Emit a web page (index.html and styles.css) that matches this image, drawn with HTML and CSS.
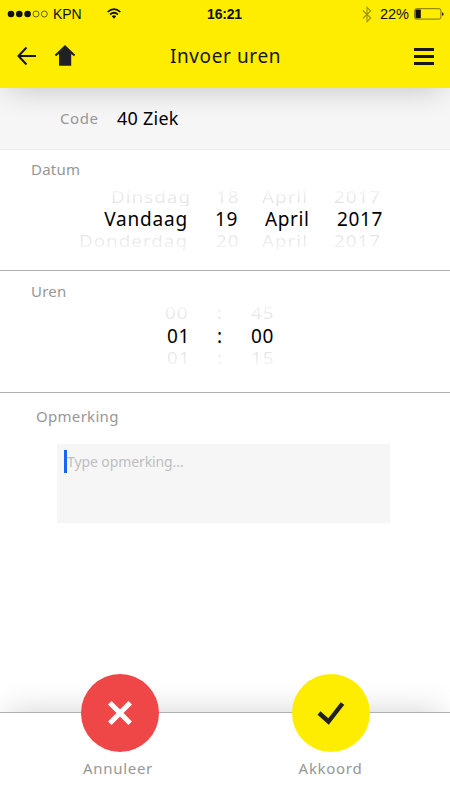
FILE: index.html
```
<!DOCTYPE html>
<html lang="nl">
<head>
<meta charset="utf-8">
<title>Invoer uren</title>
<link rel="stylesheet" href="styles.css">
</head>
<body>
<div class="app">
  <header class="header">
    <div class="status">
      <div class="carrier">
        <svg width="41" height="8" viewBox="0 0 41 8"><g fill="#111"><circle cx="4" cy="4" r="3.3"/><circle cx="12.3" cy="4" r="3.3"/><circle cx="20.6" cy="4" r="3.3"/></g><g fill="none" stroke="#222" stroke-width=".7"><circle cx="29" cy="4" r="3"/><circle cx="37.3" cy="4" r="3"/></g></svg>
        <span class="provider">KPN</span>
        <svg class="wifi" width="14" height="11" viewBox="0 0 14 11"><g fill="none" stroke="#111" stroke-width="1.7"><path d="M.6 4Q7-1.9 13.4 4"/><path d="M3.1 6.5Q7 3 10.9 6.5"/></g><path fill="#111" d="M4.8 8.2Q7 6.5 9.2 8.2L7 10.7z"/></svg>
      </div>
      <span class="clock">16:21</span>
      <div class="battery">
        <svg width="10" height="17" viewBox="0 0 10 17"><path d="M.8 4.5 8.7 12 5 15.6V1.4L8.7 5 .8 12.5" fill="none" stroke="#9b9200" stroke-width="1.1"/></svg>
        <span class="percent">22%</span>
        <svg width="30" height="12" viewBox="0 0 30 12"><rect x=".6" y=".7" width="26.3" height="10.4" rx="1.8" fill="none" stroke="#5c570d" stroke-width=".8"/><rect x="1.5" y="1.6" width="5.3" height="8.6" rx=".6" fill="#111"/><path d="M28 4.2q1.7.4 1.7 1.8T28 7.8z" fill="#222"/></svg>
      </div>
    </div>
    <nav class="navbar">
      <div class="nav-left">
        <svg width="19" height="20" viewBox="0 0 19 20"><path d="M9.5 1.5 1.5 10l8 8.5M1.5 10H19" fill="none" stroke="#16161e" stroke-width="2"/></svg>
        <svg class="home" width="22" height="21" viewBox="0 0 22 21"><path fill="#202126" d="M11 0 21.2 9.8 20 11.2 17.2 9V20.8H5V9L2 11.2.8 9.8z"/></svg>
      </div>
      <h1 class="title">Invoer uren</h1>
      <svg class="menu" width="20" height="17" viewBox="0 0 20 17"><path d="M0 1.5h20M0 8.5h20M0 15.5h20" stroke="#16161e" stroke-width="3"/></svg>
    </nav>
  </header>

  <section class="code"><span class="label code-label">Code</span><span class="code-value">40 Ziek</span></section>

  <section class="section date">
    <h2 class="label">Datum</h2>
    <div class="picker">
      <div class="row faded upper"><span class="day">Dinsdag</span><span>18</span><span>April</span><span>2017</span></div>
      <div class="row current"><span class="day">Vandaag</span><span>19</span><span>April</span><span>2017</span></div>
      <div class="row faded lower"><span class="day">Donderdag</span><span>20</span><span>April</span><span>2017</span></div>
    </div>
  </section>

  <section class="section hours">
    <h2 class="label">Uren</h2>
    <div class="picker">
      <div class="row faded upper"><span>00</span><span>:</span><span>45</span></div>
      <div class="row current"><span>01</span><span>:</span><span>00</span></div>
      <div class="row faded lower"><span class="one">01</span><span>:</span><span>15</span></div>
    </div>
  </section>

  <section class="remark">
    <h2 class="label">Opmerking</h2>
    <div class="input"><span class="caret"></span><span class="placeholder">Type opmerking...</span></div>
  </section>

  <footer class="footer">
    <div class="action">
      <div class="circle cancel"><svg width="26" height="26" viewBox="0 0 26 26"><path d="M2.8 2.8 23.2 23.2M23.2 2.8 2.8 23.2" stroke="#fff" stroke-width="5"/></svg></div>
      <span class="label cancel-label">Annuleer</span>
    </div>
    <div class="action">
      <div class="circle confirm"><svg width="28" height="25" viewBox="0 0 28 25"><path d="M2 12 11.5 20.5 25.5 2.5" fill="none" stroke="#202126" stroke-width="4.4"/></svg></div>
      <span class="label confirm-label">Akkoord</span>
    </div>
  </footer>
</div>
</body>
</html>
```
FILE: styles.css
```
* { box-sizing: border-box; }
body { margin: 0; background: #fff; font-family: "Noto Sans", sans-serif; }
svg { display: block; flex: none; }
h1, h2 { margin: 0; font-weight: 400; }
.app { width: 450px; height: 800px; display: flex; flex-direction: column; overflow: hidden; background: #fff; }

.header { height: 88px; flex: none; background: #ffed00; position: relative; z-index: 1; box-shadow: 0 10px 30px -8px rgba(0, 0, 0, .2); }
.status { height: 28px; display: grid; grid-template-columns: 1fr auto 1fr; align-items: center; padding: 0 6px 0 7px; font-family: "Liberation Sans", sans-serif; color: #111; }
.carrier, .battery { display: flex; align-items: center; }
.provider { font-size: 14px; margin-left: 5px; letter-spacing: -.1px; }
.wifi { margin-left: 25px; margin-top: -2px; }
.clock { font-size: 14px; font-weight: 700; letter-spacing: -.2px; margin-left: -2px; }
.battery { justify-content: flex-end; }
.percent { font-size: 14.5px; margin: 0 5px 0 8px; }
.navbar { height: 56px; display: grid; grid-template-columns: 1fr auto 1fr; align-items: center; padding: 0 16px 0 17px; }
.nav-left { display: flex; align-items: center; }
.home { margin-left: 18px; margin-top: -1px; }
.title { font-size: 19px; line-height: 26px; letter-spacing: .6px; color: #16161e; }
.menu { justify-self: end; }

.label { font-size: 15px; line-height: 20px; letter-spacing: .25px; color: #979797; }
.code { height: 62px; flex: none; background: #f6f6f6; border-bottom: 1px solid #eee; display: flex; align-items: center; padding: 0 0 1px 60px; }
.code-label { width: 57px; position: relative; z-index: 2; letter-spacing: .6px; }
.code-value { font-size: 18px; color: #000; position: relative; z-index: 2; letter-spacing: .25px; }

.section { flex: none; border-bottom: 1px solid #b0b0b0; padding-left: 31px; }
.date { height: 121px; padding-top: 9px; }
.hours { height: 122px; padding-top: 10px; }
.picker { margin-left: -31px; }
.row { display: grid; height: 22px; line-height: 22px; font-size: 19px; white-space: nowrap; color: #000; }
.row span { justify-self: start; }
.row .day { justify-self: end; }
.current span { letter-spacing: .6px; }
.current .day { letter-spacing: .8px; margin-right: 0; }
.date .row { grid-template-columns: 188px 77px 72px auto; }
.date .row span:nth-child(2) { margin-left: 27px; }
.date .picker { margin-top: 7px; }
.date .faded { grid-template-columns: 188px 74px 72px auto; }
.date .faded span:nth-child(2) { margin-left: 28px; }
.date .upper .day { margin-right: -3px; }
.hours .picker { margin-top: 1px; }
.hours .row { grid-template-columns: 50px 34px auto; padding-left: 167px; }
.hours .current { height: 23px; line-height: 24px; }
.hours .faded { padding-left: 165px; grid-template-columns: 52px 34px auto; }
.hours .one { margin-left: 2px; }
.faded span { font-size: 19px; transform: scaleY(.82); letter-spacing: .9px; }
.upper span { color: transparent; background: linear-gradient(#f7f7f7, #e0e0e0); background-clip: text; }
.lower span { color: transparent; background: linear-gradient(#e2e2e2, #f5f5f5); background-clip: text; }

.remark { flex: 1; padding: 13px 60px 0 36px; }
.remark .label { letter-spacing: .3px; }
.input { width: 333px; height: 79px; margin: 18px 0 0 21px; background: #f6f6f6; display: flex; align-items: flex-start; padding: 6px 7px; }
.caret { width: 3px; height: 23px; background: #1764f5; }
.placeholder { font-size: 14px; line-height: 23px; letter-spacing: -.1px; color: #bebebe; }

.footer { height: 88px; flex: none; border-top: 1px solid #b0b0b0; background: #fff; position: relative; box-shadow: 0 -10px 30px -8px rgba(0, 0, 0, .16); display: grid; grid-template-columns: 211px 211px; padding-left: 14px; }
.action { display: flex; flex-direction: column; align-items: center; margin-top: -39px; }
.circle { width: 78px; height: 78px; border-radius: 50%; display: flex; align-items: center; justify-content: center; }
.cancel { background: #ef4747; }
.confirm { background: #ffed00; }
.action .label { margin-top: 6px; letter-spacing: .7px; }
.cancel-label { margin-left: -3px; }
```
